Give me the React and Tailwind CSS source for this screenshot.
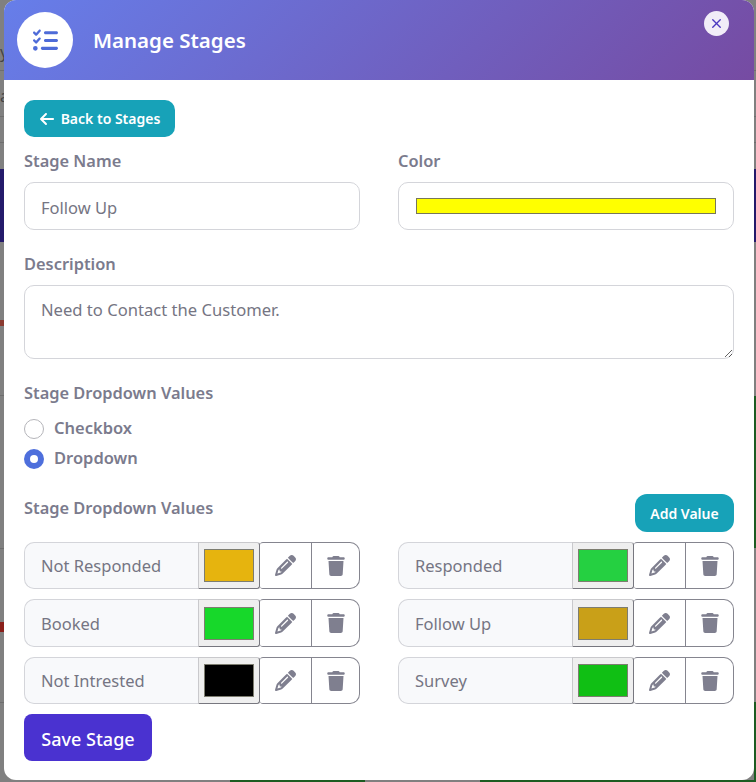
import React from "react";
import { FaListCheck, FaArrowLeft, FaPencil, FaTrash } from "react-icons/fa6";
import { X } from "lucide-react";

const rows = [
  [
    { name: "Not Responded", color: "bg-[#e6b40e]" },
    { name: "Responded", color: "bg-[#25d041]" },
  ],
  [
    { name: "Booked", color: "bg-[#17d82a]" },
    { name: "Follow Up", color: "bg-[#c9a018]" },
  ],
  [
    { name: "Not Intrested", color: "bg-black" },
    { name: "Survey", color: "bg-[#10bf14]" },
  ],
];

function Label({ children, className = "" }) {
  return <div className={`text-[16.4px] leading-[22px] font-semibold text-[#7b7b8d] ${className}`}>{children}</div>;
}

function ValueRow({ name, color }) {
  return (
    <div className="flex h-full w-[336px] text-[#7b7b8d]">
      <div className="flex w-[174px] items-center rounded-l-[10px] border border-r-0 border-[#d4d5da] bg-[#f8f9fb] pl-4 pt-[2px] text-[16.5px] text-[#757583]">
        {name}
      </div>
      <div className="flex w-[62px] items-center justify-center rounded-r-[3px] border border-[#c9c9cc] border-r-[#77777f] border-b-[#77777f] bg-[#efefef]">
        <div className={`h-[33px] w-[50px] border border-[#7d7d70] ${color}`} />
      </div>
      <div className="flex w-[52px] items-center justify-center rounded-l-[3px] border-y border-r border-[#85858f]">
        <FaPencil className="h-[21px] w-[21px] text-[#7f7f8f]" />
      </div>
      <div className="flex w-[48px] items-center justify-center rounded-r-[10px] border-y border-r border-[#85858f]">
        <FaTrash className="h-[20px] w-[18px] text-[#7f7f8f]" />
      </div>
    </div>
  );
}

export default function App() {
  return (
    <div className="relative h-[782px] w-[756px] overflow-hidden bg-[#808080] font-['Noto_Sans',sans-serif]">
      {/* dimmed page behind the dialog */}
      <div className="absolute left-0 top-[44px] text-[16px] leading-none text-[#444]">y</div>
      <div className="absolute left-0 top-[88px] text-[16px] leading-none text-[#444]">a</div>
      <div className="absolute inset-x-0 top-[70px] h-px bg-[#6e6e6e]" />
      <div className="absolute inset-x-0 top-[116px] h-px bg-[#6e6e6e]" />
      <div className="absolute inset-x-0 top-[142px] h-px bg-[#6e6e6e]" />
      <div className="absolute inset-x-0 top-[169px] h-[73px] bg-[#241a6b]" />
      <div className="absolute left-0 top-[320px] h-[6px] w-[4px] bg-[#8a3a30]" />
      <div className="absolute left-0 top-[395px] h-px w-[4px] bg-[#6e6e6e]" />
      <div className="absolute left-0 top-[548px] h-px w-[4px] bg-[#6e6e6e]" />
      <div className="absolute left-0 top-[622px] h-[10px] w-[4px] bg-[#8a1f1a]" />
      <div className="absolute left-0 top-[702px] h-px w-[4px] bg-[#6e6e6e]" />
      <div className="absolute right-0 top-[396px] h-[152px] w-[2px] bg-[#1d5c22]" />
      <div className="absolute right-0 top-[702px] h-[80px] w-[2px] bg-[#1d5c22]" />
      <div className="absolute bottom-0 left-[230px] h-[2px] w-[135px] bg-[#1d5c22]" />
      <div className="absolute bottom-0 left-[480px] h-[2px] w-[276px] bg-[#1d5c22]" />

      {/* dialog */}
      <div className="absolute left-[4px] top-0 h-[780px] w-[750px] rounded-[12px] bg-white">
        <div className="relative flex h-[80px] items-center rounded-t-[12px] bg-[linear-gradient(135deg,#667eea,#764ba2)] pl-[13px]">
          <div className="flex h-[56px] w-[56px] items-center justify-center rounded-full bg-white">
            <FaListCheck className="h-[25px] w-[25px] text-[#4e6bd8]" />
          </div>
          <h1 className="ml-[20px] text-[20.5px] font-semibold leading-none text-white">Manage Stages</h1>
          <button className="absolute right-[25px] top-[11px] flex h-[25px] w-[25px] items-center justify-center rounded-full bg-[#f1edf8]">
            <X className="h-[15px] w-[15px] text-[#4a37c0]" strokeWidth={2.2} />
          </button>
        </div>

        <div className="px-[20px] pt-[20px]">
          <button className="flex h-[37px] w-[151px] items-center justify-center gap-[6px] rounded-[10px] bg-[#17a2b8] text-[14px] font-semibold text-white">
            <FaArrowLeft className="h-[16px] w-[16px]" />
            Back to Stages
          </button>

          <div className="mt-[13px] flex gap-[38px]">
            <div className="w-[336px]">
              <Label>Stage Name</Label>
              <input
                readOnly
                value="Follow Up"
                className="mt-[10px] h-[48px] w-full rounded-[10px] border border-[#d4d5da] px-4 pt-[2px] text-[16.5px] text-[#757583] outline-none"
              />
            </div>
            <div className="w-[336px]">
              <Label>Color</Label>
              <div className="mt-[10px] flex h-[48px] items-center justify-center rounded-[10px] border border-[#d4d5da]">
                <div className="h-[16px] w-[300px] border border-[#77775a] bg-[#ffff00]" />
              </div>
            </div>
          </div>

          <Label className="mt-[23px]">Description</Label>
          <textarea
            readOnly
            value="Need to Contact the Customer."
            className="mt-[10px] block h-[74px] w-full rounded-[10px] border border-[#d4d5da] px-4 pb-[10px] pt-[11px] text-[16.6px] leading-[26px] text-[#757583] outline-none"
          />

          <Label className="mt-[23px]">Stage Dropdown Values</Label>
          <div className="mt-[15px] flex items-center gap-[10px]">
            <span className="h-[20px] w-[20px] rounded-full border border-[#b5b5ba] bg-white" />
            <span className="-translate-y-px text-[16.5px] font-semibold leading-[20px] text-[#7b7b8d]">Checkbox</span>
          </div>
          <div className="mt-[10px] flex items-center gap-[10px]">
            <span className="flex h-[20px] w-[20px] items-center justify-center rounded-full bg-[#4e6fdc]">
              <span className="h-[8px] w-[8px] rounded-full bg-white" />
            </span>
            <span className="-translate-y-px text-[16.5px] font-semibold leading-[20px] text-[#7b7b8d]">Dropdown</span>
          </div>

          <div className="mt-[25px] flex h-[38px] items-start justify-between">
            <Label className="mt-[3px]">Stage Dropdown Values</Label>
            <button className="h-[38px] w-[99px] rounded-[12px] bg-[#17a2b8] text-[14px] font-semibold text-white">Add Value</button>
          </div>

          <div className="mt-[10px] grid grid-cols-[336px_336px] grid-rows-[47px_48px_47px] gap-x-[38px] gap-y-[10px]">
            {rows.flat().map((r) => (
              <ValueRow key={r.name} name={r.name} color={r.color} />
            ))}
          </div>

          <button className="mt-[10px] h-[47px] w-[128px] rounded-[8px] bg-[#4a32d0] pt-[3px] text-[18px] font-medium text-white">Save Stage</button>
        </div>
      </div>
    </div>
  );
}
